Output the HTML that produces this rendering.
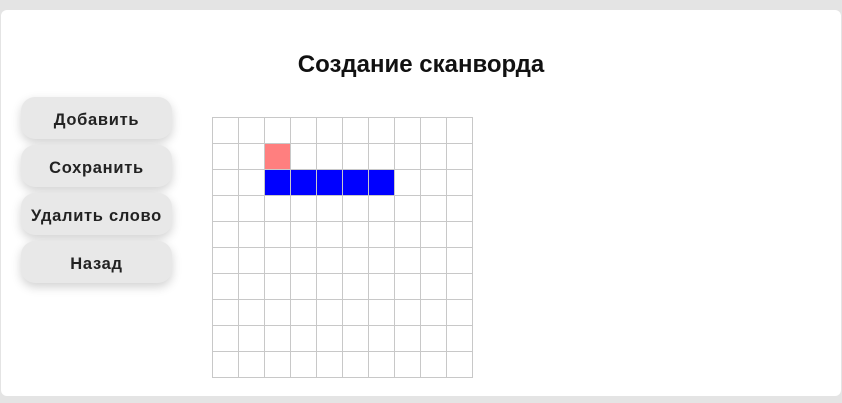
<!DOCTYPE html>
<html><head><meta charset="utf-8"><style>
body{margin:0;width:842px;height:403px;background:#e4e4e4;font-family:"Liberation Sans",sans-serif;position:relative;overflow:hidden}
.card{position:absolute;left:1px;top:10px;width:840px;height:386px;background:#fff;border-radius:6px}
h1{position:absolute;left:0;right:0;top:51px;margin:0;text-align:center;font-size:24px;font-weight:bold;color:#111}
.btn{position:absolute;left:21px;width:151px;height:42px;border-radius:14px;background:#e8e8e8;box-shadow:0 4px 10px rgba(0,0,0,0.18);font-weight:bold;font-size:16.5px;letter-spacing:0.7px;color:#222;text-align:center;line-height:46px;white-space:nowrap}
.grid{position:absolute;left:212px;top:117px;display:grid;grid-template-columns:repeat(10,25px);grid-template-rows:repeat(10,25px);gap:1px;background:#c8c8c8;padding:1px}
.grid div{background:#fff}
.grid .p{background:#ff7f7f}.grid .b{background:#0000ff}
</style></head><body>
<div class="card"></div>
<h1>Создание сканворда</h1>
<div class="btn" style="top:97px">Добавить</div>
<div class="btn" style="top:145px">Сохранить</div>
<div class="btn" style="top:193px">Удалить слово</div>
<div class="btn" style="top:241px">Назад</div>
<div class="grid">
<div></div><div></div><div></div><div></div><div></div><div></div><div></div><div></div><div></div><div></div>
<div></div><div></div><div class="p"></div><div></div><div></div><div></div><div></div><div></div><div></div><div></div>
<div></div><div></div><div class="b"></div><div class="b"></div><div class="b"></div><div class="b"></div><div class="b"></div><div></div><div></div><div></div>
<div></div><div></div><div></div><div></div><div></div><div></div><div></div><div></div><div></div><div></div>
<div></div><div></div><div></div><div></div><div></div><div></div><div></div><div></div><div></div><div></div>
<div></div><div></div><div></div><div></div><div></div><div></div><div></div><div></div><div></div><div></div>
<div></div><div></div><div></div><div></div><div></div><div></div><div></div><div></div><div></div><div></div>
<div></div><div></div><div></div><div></div><div></div><div></div><div></div><div></div><div></div><div></div>
<div></div><div></div><div></div><div></div><div></div><div></div><div></div><div></div><div></div><div></div>
<div></div><div></div><div></div><div></div><div></div><div></div><div></div><div></div><div></div><div></div>
</div>
</body></html>
